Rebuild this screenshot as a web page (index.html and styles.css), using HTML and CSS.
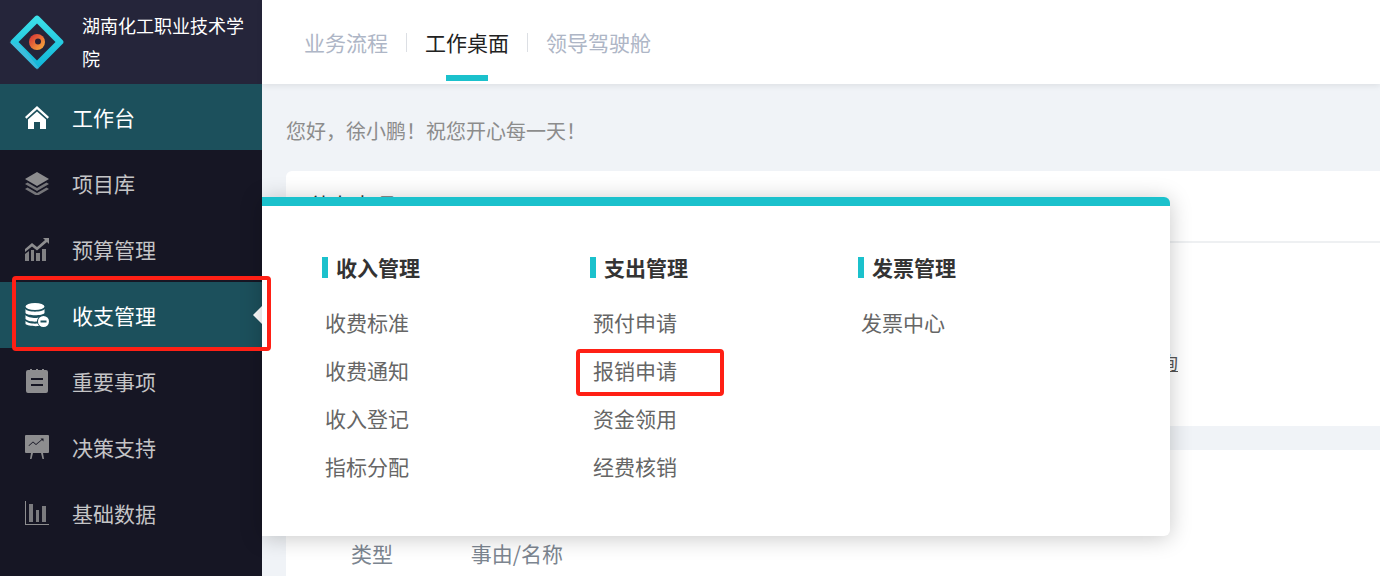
FILE: index.html
```html
<!DOCTYPE html>
<html lang="zh-CN">
<head>
  <meta charset="UTF-8">
  <meta name="viewport" content="width=device-width, initial-scale=1.0">
  <title>工作桌面</title>
  <link rel="stylesheet" href="styles.css">
</head>
<body>

<div class="layout">

  <!-- 左侧菜单 -->
  <aside class="sidebar">
    <div class="brand">
      <svg class="brand-logo" viewBox="0 0 58 58">
        <defs>
          <linearGradient id="logo-a" x1="0" y1="0" x2="1" y2="1">
            <stop offset="0" stop-color="#3fe3ea"/>
            <stop offset="1" stop-color="#0fb4d8"/>
          </linearGradient>
          <linearGradient id="logo-b" x1="0" y1="0" x2="1" y2="1">
            <stop offset="0" stop-color="#d42a35"/>
            <stop offset="1" stop-color="#fdb63c"/>
          </linearGradient>
        </defs>
        <rect x="9.5" y="9.500" width="39" height="39" rx="3" transform="rotate(45 29 29)" fill="url(#logo-a)"/>
        <path d="M1.500 29 L29 56.500 L31 55 L13 33 Z" fill="#4fbcdc" opacity=".65"/>
        <path d="M10.500 29 L29 10.500 L47.500 29 L29 47.500 Z" fill="#25253a"/>
        <circle cx="29" cy="29" r="8" fill="url(#logo-b)"/>
        <circle cx="30" cy="28.500" r="3" fill="#2a2035"/>
      </svg>
      <div class="brand-name">湖南化工职业技术学院</div>
    </div>

    <nav class="menu">
      <a class="menu-item active">
        <svg class="menu-icon" viewBox="0 0 24 24"><path d="M12 1 L24 12 L22.500 13.800 L12 4.200 L1.500 13.800 L0 12 Z"/><path d="M12 6.500 L21 14.500 V24 H15 V17 H9 V24 H3 V14.500 Z"/></svg>
        工作台
      </a>
      <a class="menu-item">
        <svg class="menu-icon" viewBox="0 0 24 24"><path d="M12 1 L24 8 L12 15 L0 8 Z"/><path d="M2.500 11.500 L12 17 L21.500 11.500 L24 13 L12 20 L0 13 Z" opacity=".8"/><path d="M2.500 16.500 L12 22 L21.500 16.500 L24 18 L12 25 L0 18 Z" opacity=".8"/></svg>
        项目库
      </a>
      <a class="menu-item">
        <svg class="menu-icon" viewBox="0 0 24 24"><path d="M0 12 L7 6 L12 10 L20 3 L18 1 H24 V7 L22 5 L12 13.500 L7 9.500 L0 15 Z"/><path d="M0 17 L4 14 V24 H0 Z M6 13 L9 13 V24 H6 Z M11 16 H15 V24 H11 Z M17 12 H21 V24 H17 Z" opacity=".9"/></svg>
        预算管理
      </a>
      <a class="menu-item active has-panel">
        <svg class="menu-icon" viewBox="0 0 24 24"><ellipse cx="10" cy="3.500" rx="9.500" ry="3.500"/><path d="M.5 6 C2 9.500 18 9.500 19.500 6 V10 C18 13 2 13 .5 10 Z"/><path d="M.5 12 C2 15 12 15.500 14 14.500 C12.500 15.500 12 17 12 18.500 C8 19 2 18 .5 16 Z"/><path d="M.5 18 C2 20 8 21 12.500 20.500 L14 23 C8 23.500 2 22.500 .5 21 Z"/><circle cx="18.500" cy="18.500" r="5.500"/><rect x="15.500" y="17.500" width="6" height="2" fill="#1c505c"/></svg>
        收支管理
      </a>
      <a class="menu-item">
        <svg class="menu-icon" viewBox="0 0 24 24"><path d="M3 1 H5 V0 H7 V1 H11 V0 H13 V1 H17 V0 H19 V1 H21 Q23 1 23 3 V22 Q23 24 21 24 H3 Q1 24 1 22 V3 Q1 1 3 1 Z M6 9 V11 H18 V9 Z M6 15 V17 H18 V15 Z" fill-rule="evenodd"/></svg>
        重要事项
      </a>
      <a class="menu-item">
        <svg class="menu-icon" viewBox="0 0 24 24"><path d="M1 0 H23 Q24 0 24 1 V17 Q24 18 23 18 H1 Q0 18 0 17 V1 Q0 0 1 0 Z M4 11 L8 7.500 L11 10 L17 5 L18.500 6.500 V3.500 H15.500 L16.500 4.500 L11 9 L8 6.500 L3.500 10.500 Z" fill-rule="evenodd"/><path d="M6 18 H8 L6.500 24 H5 Z M16 18 H18 L19 24 H17.500 Z"/></svg>
        决策支持
      </a>
      <a class="menu-item">
        <svg class="menu-icon" viewBox="0 0 24 24"><path d="M0 0 H1 V23 H24 V24 H0 Z"/><path d="M4 3 H8 V21 H4 Z M11 9 H14 V21 H11 Z M17 5 H21 V21 H17 Z" opacity=".85"/></svg>
        基础数据
      </a>
    </nav>
  </aside>

  <!-- 右侧内容 -->
  <div class="main">
    <header class="topbar">
      <a class="tab">业务流程</a>
      <a class="tab current">工作桌面</a>
      <a class="tab">领导驾驶舱</a>
    </header>

    <div class="content">
      <p class="greeting">您好，徐小鹏！祝您开心每一天！</p>

      <section class="card card-todo">
        <div class="card-title">待办事项</div>
        <div class="card-body">
          <a class="card-link">查询</a>
        </div>
      </section>

      <section class="card card-list">
        <div class="list-head">
          <span class="col-type">类型</span>
          <span>事由/名称</span>
        </div>
      </section>
    </div>
  </div>
</div>

<!-- 收支管理 下拉面板 -->
<div class="panel">
  <div class="panel-col">
    <h3>收入管理</h3>
    <a>收费标准</a>
    <a>收费通知</a>
    <a>收入登记</a>
    <a>指标分配</a>
  </div>
  <div class="panel-col">
    <h3>支出管理</h3>
    <a>预付申请</a>
    <a>报销申请</a>
    <a>资金领用</a>
    <a>经费核销</a>
  </div>
  <div class="panel-col">
    <h3>发票管理</h3>
    <a>发票中心</a>
  </div>
</div>

<!-- 截图上的红框标注 -->
<div class="mark mark-menu"></div>
<div class="mark mark-link"></div>

</body>
</html>
```

FILE: styles.css
```css
* {
  box-sizing: border-box;
}

html, body {
  height: 100%;
}

body {
  margin: 0;
  overflow: hidden;
  font-family: "Noto Sans CJK SC", "Liberation Sans", sans-serif;
  background-color: #f0f3f7;
  color: #333;
}

.layout {
  display: flex;
  height: 576px;
}

/* 左侧菜单 */
.sidebar {
  width: 262px;
  flex-shrink: 0;
  background-color: #161624;
}

.brand {
  height: 84px;
  display: flex;
  align-items: center;
  padding-left: 8px;
  background-color: #25253a;
}

.brand-logo {
  width: 58px;
  height: 58px;
  flex-shrink: 0;
}

.brand-name {
  margin-left: 16px;
  width: 172px;
  font-size: 18px;
  line-height: 33px;
  color: #fff;
}

.menu-item {
  position: relative;
  height: 66px;
  display: flex;
  align-items: center;
  padding-left: 25px;
  font-size: 21px;
  color: #c4c4c6;
}

.menu-icon {
  width: 24px;
  height: 24px;
  margin-right: 23px;
  fill: #8d8d8f;
  flex-shrink: 0;
}

.menu-item.active {
  background-color: #1c505c;
  color: #fff;
}

.menu-item.active .menu-icon {
  fill: #fff;
}

/* 指向面板的小三角 */
.has-panel::after {
  content: "";
  position: absolute;
  right: 0;
  top: 24px;
  border: 9px solid transparent;
  border-left-width: 0;
  border-right-color: #fff;
}

/* 右侧内容 */
.main {
  flex: 1;
  min-width: 0;
}

.topbar {
  height: 84px;
  display: flex;
  align-items: center;
  padding-left: 42px;
  background-color: #fff;
  box-shadow: 0 2px 6px rgba(0, 0, 0, 0.08);
}

.tab {
  position: relative;
  font-size: 21px;
  color: #aeb6c6;
  margin-right: 37px;
}

.tab + .tab::before {
  content: "";
  position: absolute;
  left: -19px;
  top: 6px;
  width: 1px;
  height: 19px;
  background-color: #dcdfe4;
}

.tab.current {
  color: #222;
}

.tab.current::after {
  content: "";
  position: absolute;
  left: 21px;
  bottom: -24px;
  width: 42px;
  height: 6px;
  background-color: #1bc1cc;
}

.content {
  padding: 0 0 0 24px;
}

.greeting {
  margin: 0;
  padding-top: 30px;
  height: 87px;
  font-size: 20px;
  line-height: 34px;
  color: #8c8c8c;
}

.card {
  background-color: #fff;
  border-radius: 6px 0 0 0;
}

.card-todo {
  height: 255px;
  margin-bottom: 24px;
}

.card-title {
  height: 72px;
  padding: 18px 0 0 24px;
  font-size: 21px;
  color: #333;
  border-bottom: 2px solid #eef0f2;
}

.card-body {
  padding: 106px 0 0 856px;
}

.card-link {
  font-size: 18px;
  color: #555;
  text-decoration: underline;
}

.card-list {
  height: 130px;
}

.list-head {
  padding: 85px 0 0 65px;
  font-size: 21px;
  line-height: 36px;
  color: #7c8590;
}

.col-type {
  margin-right: 73px;
}

/* 下拉面板 */
.panel {
  position: absolute;
  left: 262px;
  top: 197px;
  width: 908px;
  height: 339px;
  display: flex;
  padding: 51px 0 0 60px;
  background-color: #fff;
  border-top: 9px solid #1bc1cc;
  border-radius: 0 6px 6px 0;
  box-shadow: 0 2px 22px rgba(0, 0, 0, 0.22);
}

.panel-col {
  width: 268px;
}

.panel-col h3 {
  height: 21px;
  margin: 0 0 20px;
  padding-left: 14px;
  position: relative;
  font-size: 21px;
  line-height: 21px;
  font-weight: 700;
  color: #333;
}

.panel-col h3::before {
  content: "";
  position: absolute;
  left: 0;
  top: 0;
  width: 6px;
  height: 21px;
  background-color: #1bc1cc;
}

.panel-col a {
  display: block;
  height: 48px;
  padding-left: 3px;
  font-size: 21px;
  line-height: 48px;
  color: #666;
}

/* 红框标注 */
.mark {
  position: absolute;
  border: 4px solid #ff2015;
  border-radius: 4px;
}

.mark-menu {
  left: 12px;
  top: 276px;
  width: 259px;
  height: 75px;
}

.mark-link {
  left: 576px;
  top: 349px;
  width: 148px;
  height: 47px;
}
```
